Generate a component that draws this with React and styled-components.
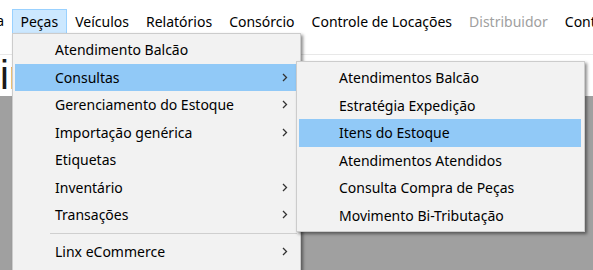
import React from 'react'
import styled, { createGlobalStyle } from 'styled-components'

const GlobalStyle = createGlobalStyle`
    html, body {
        margin: 0;
        padding: 0;
        width: 593px;
        height: 270px;
        overflow: hidden;
        background: #a0a0a0;
    }
    * {
        box-sizing: border-box;
    }
`

const topItems = [
    { label: 'Sistema', clipped: true },
    { label: 'Peças', open: true },
    { label: 'Veículos' },
    { label: 'Relatórios' },
    { label: 'Consórcio' },
    { label: 'Controle de Locações' },
    { label: 'Distribuidor', disabled: true },
    { label: 'Contabilidade' },
]

const pecasItems = [
    { label: 'Atendimento Balcão' },
    { label: 'Consultas', sub: true, active: true },
    { label: 'Gerenciamento do Estoque', sub: true },
    { label: 'Importação genérica', sub: true },
    { label: 'Etiquetas' },
    { label: 'Inventário', sub: true },
    { label: 'Transações', sub: true },
    { separator: true },
    { label: 'Linx eCommerce', sub: true },
]

const consultasItems = [
    { label: 'Atendimentos Balcão' },
    { label: 'Estratégia Expedição' },
    { label: 'Itens do Estoque', active: true },
    { label: 'Atendimentos Atendidos' },
    { label: 'Consulta Compra de Peças' },
    { label: 'Movimento Bi-Tributação' },
]

function Chevron() {
    return (
        <svg width="6" height="9" viewBox="0 0 6 9">
            <path d="M1 1 L4.5 4.5 L1 8" fill="none" stroke="#333" strokeWidth="1.3" />
        </svg>
    )
}

function MenuList({ items }) {
    return items.map((item, i) =>
        item.separator ? (
            <Separator key={i} />
        ) : (
            <MenuItem key={i} $active={item.active}>
                <span>{item.label}</span>
                {item.sub && <Chevron />}
            </MenuItem>
        )
    )
}

function App() {
    return (
        <Window>
            <GlobalStyle />
            <MenuBar>
                {topItems.map((item) =>
                    item.clipped ? (
                        <ClippedItem key={item.label}>
                            <span>{item.label}</span>
                        </ClippedItem>
                    ) : (
                        <BarItem key={item.label} $open={item.open} $disabled={item.disabled}>
                            {item.label}
                        </BarItem>
                    )
                )}
            </MenuBar>
            <ToolStrip />
            <TitleArea>in</TitleArea>
            <Workspace />

            <DropMenu $left={12} $top={33} $open>
                <MenuList items={pecasItems} />
            </DropMenu>
            <DropMenu $left={296} $top={61}>
                <MenuList items={consultasItems} />
            </DropMenu>
        </Window>
    )
}

const Window = styled.div`
    position: relative;
    width: 593px;
    height: 270px;
    display: flex;
    flex-direction: column;
    font-family: "Segoe UI", "Noto Sans", "Liberation Sans", sans-serif;
    font-size: 14px;
    color: #000;
    background: #a0a0a0;
`

const MenuBar = styled.div`
    height: 33px;
    flex-shrink: 0;
    display: flex;
    align-items: flex-end;
    background: #fff;
    white-space: nowrap;
`

const BarItem = styled.div`
    height: 24px;
    display: flex;
    align-items: center;
    padding: 0 7.5px 1px;
    flex-shrink: 0;
    border: 1px solid ${(p) => (p.$open ? '#99d1ff' : 'transparent')};
    border-bottom: none;
    background: ${(p) => (p.$open ? '#cce8ff' : 'transparent')};
    color: ${(p) => (p.$disabled ? '#a0a0a0' : '#000')};
`

const ClippedItem = styled(BarItem)`
    width: 12px;
    overflow: hidden;
    justify-content: flex-end;
    padding: 0 8px 1px 0;
    border: none;

    span {
        flex-shrink: 0;
    }
`

const ToolStrip = styled.div`
    height: 22px;
    flex-shrink: 0;
    background: #fff;
    border-bottom: 1px solid #e8e8e8;
`

const TitleArea = styled.div`
    height: 41px;
    flex-shrink: 0;
    background: #fff;
    font-family: "Liberation Sans", sans-serif;
    font-size: 40px;
    line-height: 40px;
    color: #1a1a1a;
    overflow: hidden;
`

const Workspace = styled.div`
    flex: 1;
    background: #a0a0a0;
`

const DropMenu = styled.div`
    position: absolute;
    left: ${(p) => p.$left}px;
    top: ${(p) => p.$top}px;
    width: 289px;
    padding: 2px 3px ${(p) => (p.$open ? '12px' : '2px')} 2px;
    background: #f2f2f2;
    border: 1px solid #cccccc;
    box-shadow: 2px 2px 3px rgba(0, 0, 0, 0.45);
`

const MenuItem = styled.div`
    height: 27.5px;
    display: flex;
    align-items: center;
    justify-content: space-between;
    padding: 0 9px 0 40px;
    background: ${(p) => (p.$active ? '#91c9f7' : 'transparent')};
    white-space: nowrap;
`

const Separator = styled.div`
    height: 9px;
    margin-left: 35px;
    display: flex;
    align-items: center;

    &::after {
        content: '';
        flex: 1;
        height: 1px;
        background: #cfcfcf;
    }
`

export default App
